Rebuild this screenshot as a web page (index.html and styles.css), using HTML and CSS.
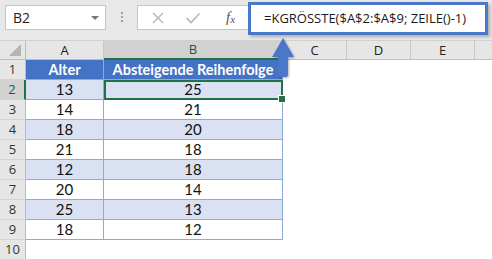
FILE: index.html
```html
<!DOCTYPE html>
<html lang="de">
<head>
    <meta charset="UTF-8">
    <title>KGRÖSSTE absteigend</title>
    <link rel="stylesheet" href="styles.css">
</head>
<body>

    <div class="window">
        <!-- Name box + formula bar -->
        <div class="toolbar">
            <div class="name-box">
                <span>B2</span>
                <span class="drop"></span>
            </div>
            <div class="grip"><i></i><i></i><i></i></div>
            <div class="fx-buttons">
                <svg class="btn-icon" width="14" height="14" viewBox="0 0 14 14">
                    <path d="M2 2 L12 12 M12 2 L2 12" stroke="#b4b4b4" stroke-width="1.4" fill="none"/>
                </svg>
                <svg class="btn-icon" width="16" height="14" viewBox="0 0 16 14">
                    <path d="M1.5 7 L6 11.5 L14.5 2.5" stroke="#b4b4b4" stroke-width="1.6" fill="none"/>
                </svg>
                <span class="fx">f<sub>x</sub></span>
            </div>
            <div class="formula">=KGRÖSSTE($A$2:$A$9; ZEILE()-1)</div>
        </div>

        <!-- Sheet -->
        <div class="sheet">
            <div class="corner"><span class="tri"></span></div>
            <div class="col-head">A</div>
            <div class="col-head sel">B</div>
            <div class="col-head">C</div>
            <div class="col-head">D</div>
            <div class="col-head">E</div>
            <div class="col-head last"></div>

            <div class="row-head">1</div>
            <div class="cell th">Alter</div>
            <div class="cell th">Absteigende Reihenfolge</div>
            <div class="blank"></div>

            <div class="row-head sel">2</div>
            <div class="cell band">13</div>
            <div class="cell band active">25</div>
            <div class="blank"></div>

            <div class="row-head">3</div>
            <div class="cell">14</div>
            <div class="cell">21</div>
            <div class="blank"></div>

            <div class="row-head">4</div>
            <div class="cell band">18</div>
            <div class="cell band">20</div>
            <div class="blank"></div>

            <div class="row-head">5</div>
            <div class="cell">21</div>
            <div class="cell">18</div>
            <div class="blank"></div>

            <div class="row-head">6</div>
            <div class="cell band">12</div>
            <div class="cell band">18</div>
            <div class="blank"></div>

            <div class="row-head">7</div>
            <div class="cell">20</div>
            <div class="cell">14</div>
            <div class="blank"></div>

            <div class="row-head">8</div>
            <div class="cell band">25</div>
            <div class="cell band">13</div>
            <div class="blank"></div>

            <div class="row-head">9</div>
            <div class="cell">18</div>
            <div class="cell">12</div>
            <div class="blank"></div>

            <div class="row-head">10</div>
            <div class="blank wide"></div>
        </div>

        <!-- Callout arrow pointing at the formula -->
        <svg class="arrow" width="40" height="50" viewBox="0 0 40 50">
            <defs>
                <filter id="sh" x="-30%" y="-30%" width="160%" height="160%">
                    <feDropShadow dx="1" dy="1" stdDeviation="1" flood-color="#000" flood-opacity="0.3"/>
                </filter>
            </defs>
            <path d="M15 2 L26 21 L20 21 L20 39 Q20 41 18 41 L12 41 Q10 41 10 39 L10 21 L4 21 Z" fill="#4a78c8" filter="url(#sh)"/>
        </svg>
    </div>

</body>
</html>
```

FILE: styles.css
```css
body {
    margin: 0;
    background: #fff;
    font-family: 'Open Sans', 'Noto Sans', sans-serif;
}

.window {
    position: relative;
    width: 492px;
    height: 259px;
    overflow: hidden;
    background: #fff;
}

/* Formula bar area */
.toolbar {
    height: 41px;
    background: #e8e8e8;
    display: flex;
    align-items: flex-start;
    box-sizing: border-box;
    border-bottom: 1px solid #d0d0d0;
}

.name-box {
    margin: 5px 0 0 5px;
    width: 101px;
    height: 25px;
    box-sizing: border-box;
    background: #fff;
    border: 1px solid #c6c6c6;
    display: flex;
    align-items: center;
    justify-content: space-between;
    padding: 0 6px 0 7px;
    font-size: 14px;
    color: #222;
}

.drop {
    width: 0;
    height: 0;
    border-left: 4px solid transparent;
    border-right: 4px solid transparent;
    border-top: 4px solid #777;
}

.grip {
    width: 31px;
    display: flex;
    flex-direction: column;
    align-items: center;
    gap: 2px;
    padding-top: 12px;
}

.grip i {
    width: 2px;
    height: 2px;
    background: #a0a0a0;
}

.fx-buttons {
    margin-top: 5px;
    width: 111px;
    height: 25px;
    box-sizing: border-box;
    background: #fff;
    border: 1px solid #c6c6c6;
    border-right: none;
    display: flex;
    align-items: center;
    padding-left: 13px;
    gap: 20px;
}

.fx {
    font-family: 'Liberation Serif', serif;
    font-style: italic;
    font-size: 15px;
    color: #555;
    margin-left: 5px;
}

.fx sub {
    font-size: 11px;
    vertical-align: 0;
    position: relative;
    top: 1px;
}

.formula {
    margin-top: 2px;
    width: 240px;
    height: 33px;
    box-sizing: border-box;
    border: 3px solid #4a78c8;
    background: #fff;
    box-shadow: 2px 2px 3px rgba(0, 0, 0, 0.25);
    font-size: 13px;
    color: #1a1a1a;
    padding-left: 13px;
    line-height: 27px;
    white-space: nowrap;
}

/* Worksheet grid */
.sheet {
    display: grid;
    grid-template-columns: 26px 78px 179px 64px 64px 64px 1fr;
    grid-template-rows: 19px repeat(10, 20px);
    font-family: 'Lato', 'Open Sans', sans-serif;
    font-size: 15px;
}

.corner {
    position: relative;
    background: #e6e6e6;
    border-right: 1px solid #bdbdbd;
    border-bottom: 1px solid #bdbdbd;
}

.corner .tri {
    position: absolute;
    right: 4px;
    bottom: 3px;
    width: 0;
    height: 0;
    border-left: 12px solid transparent;
    border-bottom: 12px solid #b4b4b4;
}

.col-head {
    background: #e6e6e6;
    border-right: 1px solid #c8c8c8;
    border-bottom: 1px solid #bdbdbd;
    text-align: center;
    font-family: 'Open Sans', sans-serif;
    font-size: 13px;
    line-height: 18px;
    color: #222;
}

.col-head.sel {
    background: #d2d2d2;
    border-bottom: 2px solid #217346;
    color: #1d5a35;
    line-height: 17px;
}

.col-head.last {
    border-right: none;
}

.row-head {
    background: #e6e6e6;
    border-right: 1px solid #bdbdbd;
    border-bottom: 1px solid #d4d4d4;
    font-family: 'Open Sans', sans-serif;
    font-size: 13px;
    line-height: 19px;
    text-align: center;
    color: #333;
}

.row-head.sel {
    background: #d2d2d2;
    border-right: 2px solid #217346;
    color: #1d5a35;
}

.cell {
    border-right: 1px solid #8eaadb;
    border-bottom: 1px solid #8eaadb;
    text-align: center;
    line-height: 19px;
    color: #111;
    background: #fff;
}

.cell.th {
    background: #4472c4;
    color: #fff;
    font-weight: bold;
    font-size: 14.5px;
    border-color: #8eaadb;
}

.cell.band {
    background: #d9e1f2;
}

.cell.active {
    position: relative;
    outline: 2px solid #217346;
    outline-offset: -2px;
}

.cell.active::after {
    content: '';
    position: absolute;
    right: -4px;
    bottom: -4px;
    width: 6px;
    height: 6px;
    background: #217346;
    border: 1px solid #fff;
}

.blank {
    grid-column: 4 / 8;
}

.blank.wide {
    grid-column: 2 / 8;
}

.arrow {
    position: absolute;
    left: 268px;
    top: 36px;
}
```
